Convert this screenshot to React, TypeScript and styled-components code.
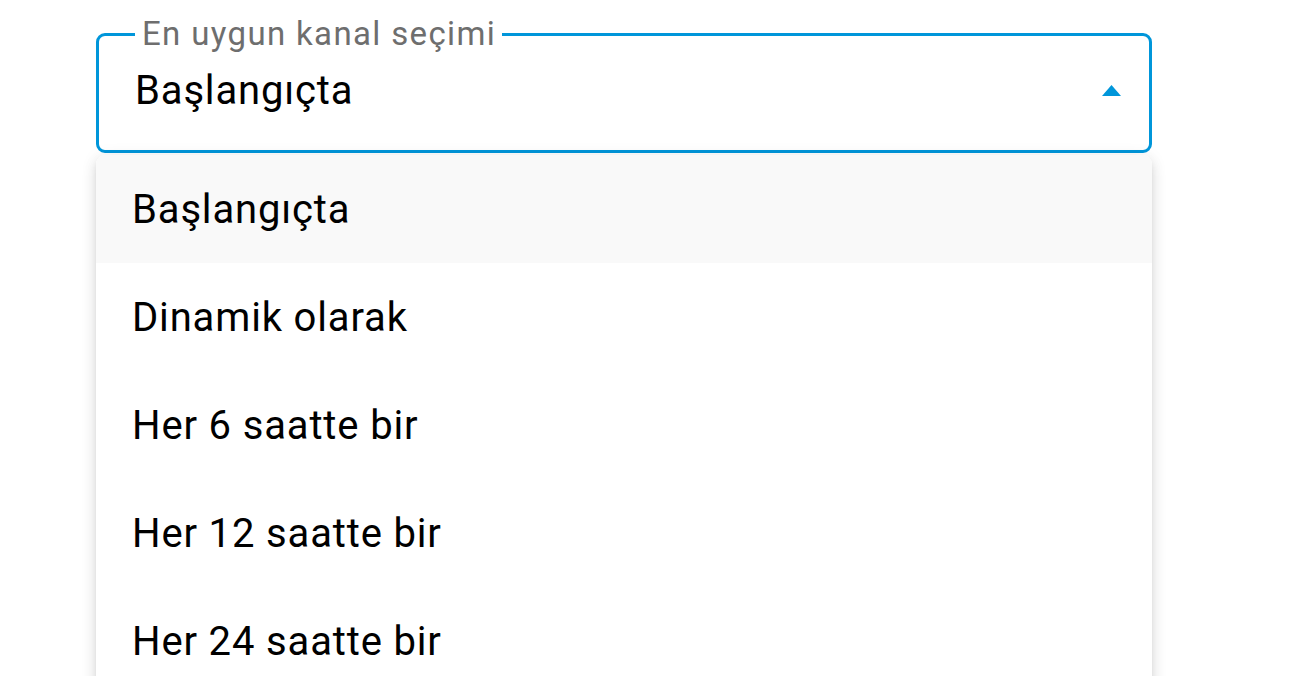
import styled, { createGlobalStyle } from "styled-components";

const options = ["Başlangıçta", "Dinamik olarak", "Her 6 saatte bir", "Her 12 saatte bir", "Her 24 saatte bir"];
const selected = "Başlangıçta";

const GlobalStyle = createGlobalStyle`
  html, body {
    margin: 0;
    padding: 0;
    background: #ffffff;
    overflow: hidden;
  }
  body {
    font-family: Roboto, "Noto Sans", sans-serif;
  }
`;

export default function App() {
  return (
    <>
      <GlobalStyle />
      <Page>
        <SelectField>
          <Label>En uygun kanal seçimi</Label>
          <ValueRow>
            <Value>{selected}</Value>
            <Arrow viewBox="0 0 19 11">
              <polygon points="0,11 9.5,0 19,11" />
            </Arrow>
          </ValueRow>
        </SelectField>
        <Menu>
          {options.map((o) => (
            <MenuItem key={o} $active={o === selected}>
              {o}
            </MenuItem>
          ))}
        </Menu>
      </Page>
    </>
  );
}

const Page = styled.div`
  width: 1056px;
  padding: 19px 0 0 96px;
`;

const SelectField = styled.fieldset`
  margin: 0;
  min-width: 0;
  padding: 0 28px 0 36px;
  border: 3px solid #0096da;
  border-radius: 9px;
`;

const Label = styled.legend`
  padding: 0 6px 0 7px;
  font-size: 33px;
  line-height: 30px;
  letter-spacing: 1.35px;
  color: #6e6e6e;
`;

const ValueRow = styled.div`
  height: 101px;
  padding-bottom: 18px;
  box-sizing: border-box;
  display: flex;
  align-items: center;
  justify-content: space-between;
`;

const Value = styled.span`
  font-size: 40px;
  line-height: 40px;
  letter-spacing: 0.85px;
  color: #000000;
`;

const Arrow = styled.svg`
  width: 19px;
  height: 11px;
  fill: #0096da;
`;

const Menu = styled.ul`
  list-style: none;
  margin: 2px 0 0;
  padding: 0;
  background: #ffffff;
  border-radius: 9px;
  overflow: hidden;
  box-shadow: 0 4px 6px -2px rgba(0, 0, 0, 0.12), 0 6px 14px 1px rgba(0, 0, 0, 0.08),
    0 2px 16px 2px rgba(0, 0, 0, 0.06);
`;

const MenuItem = styled.li<{ $active?: boolean }>`
  height: 108px;
  padding: 0 36px;
  display: flex;
  align-items: center;
  font-size: 40px;
  letter-spacing: 0.85px;
  color: #000000;
  background: ${(p) => (p.$active ? "#f9f9f9" : "#ffffff")};
`;
